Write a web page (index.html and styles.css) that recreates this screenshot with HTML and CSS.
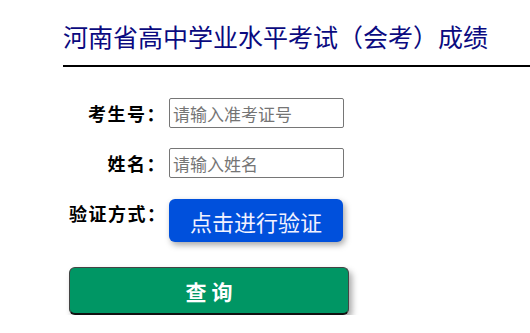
FILE: index.html
```html
<!DOCTYPE html>
<html lang="zh-CN">
<head>
<meta charset="utf-8">
<title>河南省高中学业水平考试（会考）成绩</title>
<link rel="stylesheet" href="styles.css">
</head>
<body>
<div class="header">
  <h1 class="title">河南省高中学业水平考试（会考）成绩</h1>
</div>
<form class="form">
  <label class="label" for="zkzh">考生号：</label>
  <input class="field" id="zkzh" type="text" placeholder="请输入准考证号">
  <label class="label" for="xm">姓名：</label>
  <input class="field" id="xm" type="text" placeholder="请输入姓名">
  <span class="label">验证方式：</span>
  <button class="verify" type="button">点击进行验证</button>
</form>
<button class="query" type="button">查 询</button>
</body>
</html>
```

FILE: styles.css
```css
* { box-sizing: border-box; }
body {
  margin: 0;
  font-family: "Noto Sans CJK SC", "Noto Sans", sans-serif;
  background: #fff;
}
.header {
  margin-left: 63px;
  padding-top: 18px;
  padding-bottom: 11px;
  border-bottom: 2px solid #000;
}
.title {
  margin: 0;
  font-size: 25px;
  line-height: 36px;
  font-weight: normal;
  color: #0a0a80;
}
.form {
  display: grid;
  grid-template-columns: 97px 175px;
  column-gap: 3px;
  row-gap: 20px;
  margin: 31px 0 0 69px;
  align-items: start;
}
.label {
  font-size: 18px;
  font-weight: bold;
  letter-spacing: 1.5px;
  line-height: 30px;
  text-align: right;
  color: #000;
  white-space: nowrap;
}
.field {
  width: 175px;
  height: 30px;
  margin: 0;
  border: 1px solid #767676;
  border-radius: 2px;
  padding: 0 3px;
  font-family: inherit;
  font-size: 17px;
  color: #000;
}
.field::placeholder { color: #757575; }
.verify {
  width: 174px;
  height: 43px;
  margin: 1px 0 0;
  border: none;
  border-radius: 6px;
  background: #0050dc;
  color: #f2f2ff;
  font-family: inherit;
  font-size: 22px;
  box-shadow: 2px 3px 6px rgba(0, 0, 0, 0.35);
}
.query {
  display: block;
  width: 280px;
  height: 48px;
  margin: 25px 0 0 69px;
  border: 1px solid #444;
  border-bottom: 2px solid #111;
  border-radius: 6px;
  background: #009664;
  color: #fff;
  font-family: inherit;
  font-size: 21px;
  font-weight: bold;
  box-shadow: 3px 4px 6px rgba(0, 0, 0, 0.35);
}
```
